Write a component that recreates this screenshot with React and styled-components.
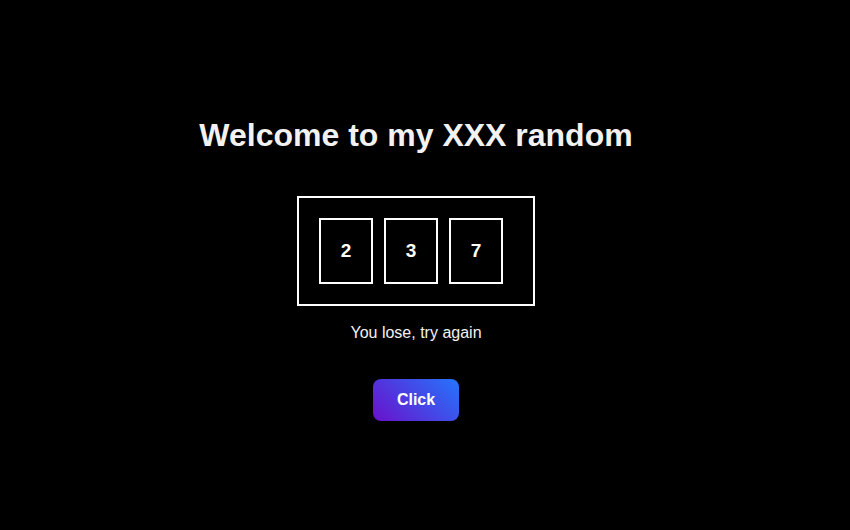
import React, { useState } from "react";
import styled, { createGlobalStyle } from "styled-components";

const GlobalStyle = createGlobalStyle`
  html, body {
    margin: 0;
    padding: 0;
    background: #000;
  }
  body {
    font-family: "Liberation Sans", Arial, sans-serif;
    color: #f2f2f2;
  }
`;

const Page = styled.div`
  width: 832px;
  height: 530px;
  display: flex;
  flex-direction: column;
  align-items: center;
  justify-content: center;
  box-sizing: border-box;
  padding-top: 8px;
`;

const Title = styled.h1`
  margin: 0 0 42px;
  font-size: 32px;
  font-weight: bold;
  color: #f2f2f2;
`;

const Board = styled.div`
  display: flex;
  gap: 11px;
  padding: 20px 30px 20px 20px;
  border: 2px solid #fff;
`;

const Slot = styled.div`
  width: 50px;
  height: 62px;
  border: 2px solid #fff;
  display: flex;
  align-items: center;
  justify-content: center;
  font-size: 19px;
  font-weight: bold;
  color: #fff;
`;

const Message = styled.p`
  margin: 18px 0 37px;
  font-size: 16px;
  color: #f2f2f2;
`;

const Button = styled.button`
  padding: 12px 24px;
  border: none;
  border-radius: 8px;
  background: linear-gradient(45deg, #6a11cb, #2575fc);
  color: #fff;
  font-family: "Liberation Sans", Arial, sans-serif;
  font-size: 16px;
  font-weight: bold;
  cursor: pointer;
`;

const App = () => {
  const [numbers, setNumbers] = useState([2, 3, 7]);

  const roll = () => {
    setNumbers(numbers.map(() => Math.floor(Math.random() * 10)));
  };

  const win = numbers.every((n) => n === numbers[0]);

  return (
    <>
      <GlobalStyle />
      <Page>
        <Title>Welcome to my XXX random</Title>
        <Board>
          {numbers.map((n, i) => (
            <Slot key={i}>{n}</Slot>
          ))}
        </Board>
        <Message>{win ? "You win!" : "You lose, try again"}</Message>
        <Button onClick={roll}>Click</Button>
      </Page>
    </>
  );
};

export default App;
